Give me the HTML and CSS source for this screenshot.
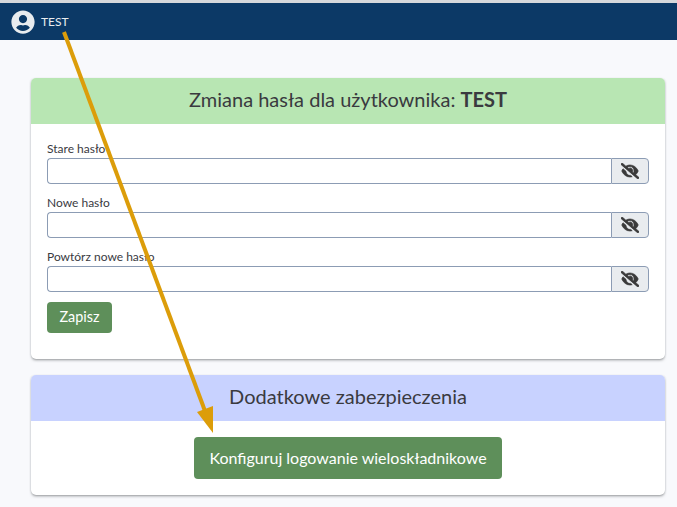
FILE: index.html
```html
<!DOCTYPE html>
<html lang="pl">
<head>
<meta charset="utf-8">
<title>Zmiana hasła</title>
<link rel="stylesheet" href="styles.css">
</head>
<body>
<header class="topbar">
  <svg class="user-icon" viewBox="0 0 496 512"><path fill="currentColor" d="M248 8C111 8 0 119 0 256s111 248 248 248 248-111 248-248S385 8 248 8zm0 96c48.6 0 88 39.4 88 88s-39.4 88-88 88-88-39.4-88-88 39.4-88 88-88zm0 344c-58.7 0-111.3-26.6-146.5-68.2 18.8-35.4 55.6-59.8 98.5-59.8 2.4 0 4.8.4 7.1 1.1 13 4.2 26.6 6.9 40.9 6.9 14.3 0 28-2.7 40.9-6.9 2.3-.7 4.7-1.1 7.1-1.1 42.9 0 79.7 24.4 98.5 59.8C359.3 421.4 306.7 448 248 448z"/></svg>
  <span class="user-name">TEST</span>
</header>
<main class="content">
  <section class="card">
    <h2 class="card-head card-head-green">Zmiana hasła dla użytkownika: <strong>TEST</strong></h2>
    <form class="card-body form-body">
      <div class="field">
        <label class="field-label">Stare hasło</label>
        <div class="input-group">
          <input class="text-input" type="password">
          <button class="eye-btn" type="button"><svg class="eye-icon" viewBox="0 0 640 512" preserveAspectRatio="none"><path fill="currentColor" d="M320 400c-75.85 0-137.25-58.71-142.9-133.11L72.2 185.82c-13.79 17.3-26.48 35.59-36.72 55.59a32.35 32.35 0 0 0 0 29.19C89.71 376.41 197.07 448 320 448c26.91 0 52.87-4 77.89-10.46L346 397.39a144.13 144.13 0 0 1-26 2.61zm313.82 58.1l-110.55-85.44a331.25 331.25 0 0 0 81.25-102.07 32.35 32.35 0 0 0 0-29.19C550.29 135.59 442.93 64 320 64a308.15 308.15 0 0 0-147.32 37.7L45.46 3.37A16 16 0 0 0 23 6.18L3.37 31.45A16 16 0 0 0 6.18 53.9l588.36 454.73a16 16 0 0 0 22.46-2.81l19.64-25.27a16 16 0 0 0-2.82-22.45zm-183.72-142l-39.3-30.38A94.75 94.75 0 0 0 416 256a94.76 94.76 0 0 0-121.31-92.21A47.65 47.65 0 0 1 304 192a46.64 46.64 0 0 1-1.54 10l-73.61-56.89A142.31 142.31 0 0 1 320 112a143.92 143.92 0 0 1 144 144c0 21.63-5.29 41.79-13.9 60.11z"/></svg></button>
        </div>
      </div>
      <div class="field">
        <label class="field-label">Nowe hasło</label>
        <div class="input-group">
          <input class="text-input" type="password">
          <button class="eye-btn" type="button"><svg class="eye-icon" viewBox="0 0 640 512" preserveAspectRatio="none"><path fill="currentColor" d="M320 400c-75.85 0-137.25-58.71-142.9-133.11L72.2 185.82c-13.79 17.3-26.48 35.59-36.72 55.59a32.35 32.35 0 0 0 0 29.19C89.71 376.41 197.07 448 320 448c26.91 0 52.87-4 77.89-10.46L346 397.39a144.13 144.13 0 0 1-26 2.61zm313.82 58.1l-110.55-85.44a331.25 331.25 0 0 0 81.25-102.07 32.35 32.35 0 0 0 0-29.19C550.29 135.59 442.93 64 320 64a308.15 308.15 0 0 0-147.32 37.7L45.46 3.37A16 16 0 0 0 23 6.18L3.37 31.45A16 16 0 0 0 6.18 53.9l588.36 454.73a16 16 0 0 0 22.46-2.81l19.64-25.27a16 16 0 0 0-2.82-22.45zm-183.72-142l-39.3-30.38A94.75 94.75 0 0 0 416 256a94.76 94.76 0 0 0-121.31-92.21A47.65 47.65 0 0 1 304 192a46.64 46.64 0 0 1-1.54 10l-73.61-56.89A142.31 142.31 0 0 1 320 112a143.92 143.92 0 0 1 144 144c0 21.63-5.29 41.79-13.9 60.11z"/></svg></button>
        </div>
      </div>
      <div class="field">
        <label class="field-label">Powtórz nowe hasło</label>
        <div class="input-group">
          <input class="text-input" type="password">
          <button class="eye-btn" type="button"><svg class="eye-icon" viewBox="0 0 640 512" preserveAspectRatio="none"><path fill="currentColor" d="M320 400c-75.85 0-137.25-58.71-142.9-133.11L72.2 185.82c-13.79 17.3-26.48 35.59-36.72 55.59a32.35 32.35 0 0 0 0 29.19C89.71 376.41 197.07 448 320 448c26.91 0 52.87-4 77.89-10.46L346 397.39a144.13 144.13 0 0 1-26 2.61zm313.82 58.1l-110.55-85.44a331.25 331.25 0 0 0 81.25-102.07 32.35 32.35 0 0 0 0-29.19C550.29 135.59 442.93 64 320 64a308.15 308.15 0 0 0-147.32 37.7L45.46 3.37A16 16 0 0 0 23 6.18L3.37 31.45A16 16 0 0 0 6.18 53.9l588.36 454.73a16 16 0 0 0 22.46-2.81l19.64-25.27a16 16 0 0 0-2.82-22.45zm-183.72-142l-39.3-30.38A94.75 94.75 0 0 0 416 256a94.76 94.76 0 0 0-121.31-92.21A47.65 47.65 0 0 1 304 192a46.64 46.64 0 0 1-1.54 10l-73.61-56.89A142.31 142.31 0 0 1 320 112a143.92 143.92 0 0 1 144 144c0 21.63-5.29 41.79-13.9 60.11z"/></svg></button>
        </div>
      </div>
      <button class="btn btn-save" type="button">Zapisz</button>
    </form>
  </section>
  <section class="card">
    <h2 class="card-head card-head-blue">Dodatkowe zabezpieczenia</h2>
    <div class="card-body mfa-body">
      <button class="btn btn-mfa" type="button">Konfiguruj logowanie wieloskładnikowe</button>
    </div>
  </section>
</main>
<svg class="arrow" viewBox="0 0 677 507"><line x1="64" y1="32" x2="205" y2="411" stroke="#dc9d0a" stroke-width="4"/><polygon fill="#dc9d0a" points="197,412 213,406 213,433"/></svg>
</body>
</html>
```

FILE: styles.css
```css
html, body {
  margin: 0;
  padding: 0;
  height: 100%;
  overflow: hidden;
}
body {
  background: #f8f9fc;
  font-family: Lato, "Open Sans", sans-serif;
  color: #3a3a3f;
  border-top: 3px solid #d6d8db;
  box-sizing: border-box;
  position: relative;
}
.topbar {
  display: flex;
  align-items: center;
  gap: 6px;
  height: 37px;
  padding-left: 11px;
  background: #0c3966;
  color: #e9ecef;
}
.user-icon {
  width: 24px;
  height: 24px;
}
.user-name {
  font-size: 12px;
}
.content {
  display: flex;
  flex-direction: column;
  gap: 16px;
  padding: 38px 12px 0 31px;
}
.card {
  background: #fff;
  border-radius: 5px;
  box-shadow: 0 2px 3px -1px rgba(60, 64, 67, 0.55), 1px 0 2px -1px rgba(60, 64, 67, 0.25), -1px 0 2px -1px rgba(60, 64, 67, 0.25);
}
.card-head {
  margin: 0;
  height: 43px;
  padding-bottom: 3px;
  line-height: 43px;
  text-align: center;
  font-size: 20px;
  font-weight: 400;
  border-radius: 5px 5px 0 0;
}
.card-head strong {
  font-weight: 700;
}
.card-head-green {
  background: #b8e6b3;
}
.card-head-blue {
  background: #c8d2ff;
}
.card-body {
  padding: 16px;
}
.form-body {
  padding-bottom: 26px;
}
.field {
  margin-bottom: 10px;
}
.field-label {
  display: block;
  height: 18px;
  line-height: 18px;
  font-size: 12px;
}
.input-group {
  display: flex;
  height: 26px;
}
.text-input {
  flex: 1;
  min-width: 0;
  box-sizing: border-box;
  margin: 0;
  border: 1px solid #8c9cb4;
  border-right: 0;
  border-radius: 4px 0 0 4px;
  background: #fff;
}
.eye-btn {
  width: 38px;
  box-sizing: border-box;
  margin: 0;
  padding: 0;
  display: flex;
  align-items: center;
  justify-content: center;
  background: #e9ecef;
  border: 1px solid #8c9cb4;
  border-radius: 0 4px 4px 0;
  color: #3a3a3a;
}
.eye-icon {
  width: 18px;
  height: 16px;
}
.eye-icon path {
  stroke: currentColor;
  stroke-width: 24;
}
.btn {
  display: block;
  border: 0;
  border-radius: 4px;
  background: #5e8f5a;
  color: #fff;
  font-family: inherit;
  cursor: pointer;
}
.btn-save {
  width: 65px;
  height: 31px;
  padding: 0 0 2px;
  font-size: 14.4px;
}
.mfa-body {
  display: flex;
  justify-content: center;
}
.btn-mfa {
  width: 308px;
  height: 42px;
  padding: 0 0 2px;
  font-size: 16px;
}
.arrow {
  position: absolute;
  left: 0;
  top: -3px;
  width: 677px;
  height: 507px;
  pointer-events: none;
}
```
